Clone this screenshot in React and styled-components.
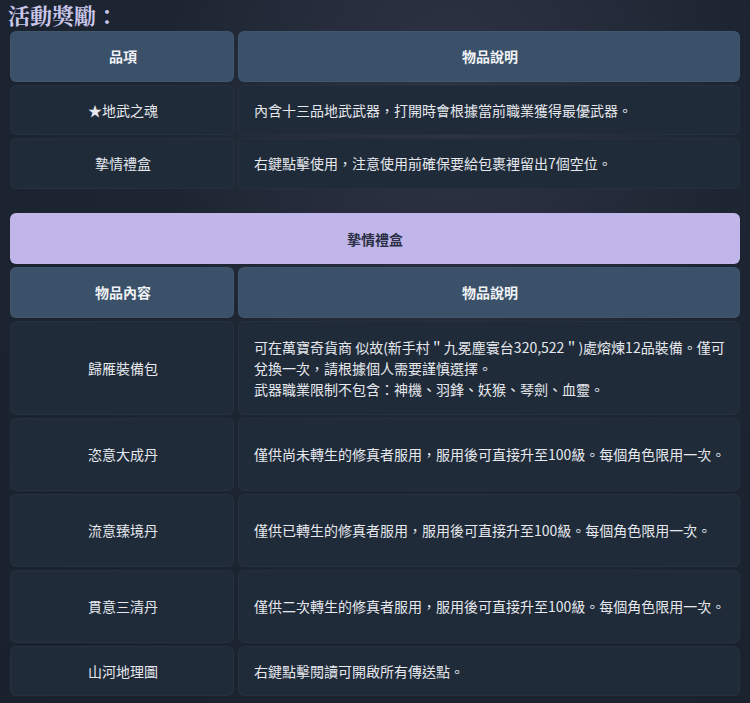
import React from 'react';
import styled, { createGlobalStyle } from 'styled-components';

const Global = createGlobalStyle`
  body { margin: 0; background: #1b2330; }
`;

const Page = styled.div`
  width: 750px;
  height: 703px;
  overflow: hidden;
  background: radial-gradient(ellipse at 60% 15%, #2f3344 0%, #1d2532 45%, #19212d 100%);
  padding: 0 10px 0 10px;
  box-sizing: border-box;
  font-family: "Noto Sans CJK TC", "Noto Sans", sans-serif;
  text-spacing-trim: space-all;
  font-kerning: none;
`;

const Title = styled.h2`
  margin: 0;
  height: 31px;
  line-height: 30px;
  font-family: "Noto Serif CJK TC", "Liberation Serif", "Noto Sans CJK TC", serif;
  font-size: 22px;
  font-weight: 700;
  color: #c9c6ea;
  margin-left: -2px;
`;

const Table = styled.div`
  display: grid;
  grid-template-columns: 224px 1fr;
  gap: 3px 4px;
  margin-bottom: ${p => p.$mb || 0}px;
`;

const Cell = styled.div`
  border-radius: 6px;
  background: ${p => (p.$head ? '#3a5169' : '#1f2b39')};
  color: ${p => (p.$head ? '#f0f2f6' : '#e6e8ee')};
  font-weight: ${p => (p.$head ? 700 : 400)};
  font-size: 14px;
  line-height: 21px;
  min-height: ${p => p.$h || 51}px;
  display: flex;
  align-items: center;
  justify-content: ${p => (p.$left ? 'flex-start' : 'center')};
  padding: 0 14px 0 16px;
  box-sizing: border-box;
  box-shadow: inset 0 0 0 1px rgba(255,255,255,0.03);
`;

const Banner = styled.div`
  grid-column: 1 / -1;
  height: 51px;
  border-radius: 6px;
  background: #c0b6ea;
  color: #2b2f45;
  font-size: 14px;
  font-weight: 700;
  display: flex;
  align-items: center;
  justify-content: center;
`;

const rewards = [
  ['★地武之魂', '內含十三品地武武器，打開時會根據當前職業獲得最優武器。', 50],
  ['摯情禮盒', '右鍵點擊使用，注意使用前確保要給包裹裡留出7個空位。', 51],
];

const contents = [
  ['歸雁裝備包', <>可在萬寶奇貨商 似故(新手村＂九冕塵寰台320,522＂)處熔煉12品裝備。僅可兌換一次，請根據個人需要謹慎選擇。<br />武器職業限制不包含：神機、羽鋒、妖猴、琴劍、血靈。</>, 94],
  ['恣意大成丹', '僅供尚未轉生的修真者服用，服用後可直接升至100級。每個角色限用一次。', 73],
  ['流意臻境丹', '僅供已轉生的修真者服用，服用後可直接升至100級。每個角色限用一次。', 73],
  ['貫意三清丹', '僅供二次轉生的修真者服用，服用後可直接升至100級。每個角色限用一次。', 73],
  ['山河地理圖', '右鍵點擊閱讀可開啟所有傳送點。', 50],
];

export default function App() {
  return (
    <Page>
      <Global />
      <Title>活動獎勵：</Title>
      <Table $mb={24}>
        <Cell $head>品項</Cell>
        <Cell $head>物品說明</Cell>
        {rewards.map(([name, desc, h]) => (
          <React.Fragment key={name}>
            <Cell $h={h}>{name}</Cell>
            <Cell $h={h} $left>{desc}</Cell>
          </React.Fragment>
        ))}
      </Table>
      <Table>
        <Banner>摯情禮盒</Banner>
        <Cell $head>物品內容</Cell>
        <Cell $head>物品說明</Cell>
        {contents.map(([name, desc, h]) => (
          <React.Fragment key={name}>
            <Cell $h={h}>{name}</Cell>
            <Cell $h={h} $left>{desc}</Cell>
          </React.Fragment>
        ))}
      </Table>
    </Page>
  );
}
